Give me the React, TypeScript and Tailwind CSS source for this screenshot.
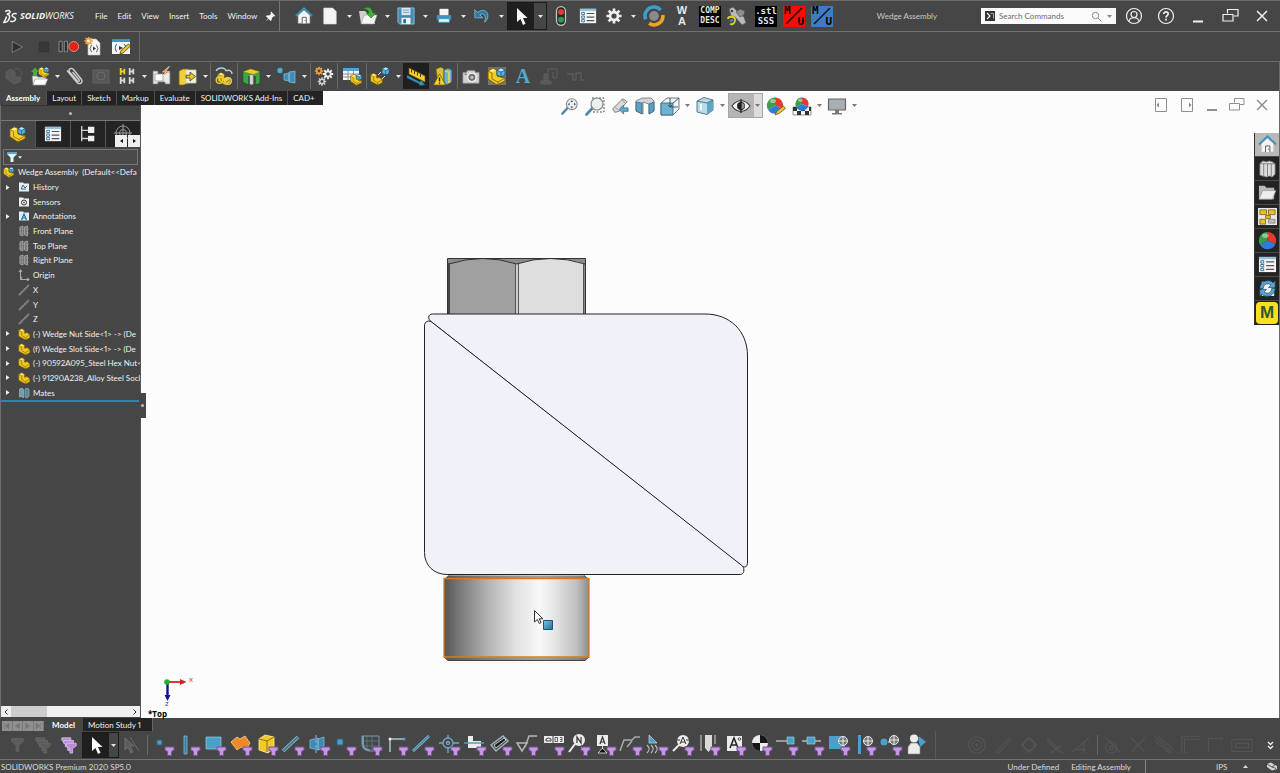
import React from "react";

type Kids = { children?: React.ReactNode };

/* ---------- shared drawing pieces ---------- */

function Svg({ size = 20, box = 20, children }: Kids & { size?: number; box?: number }) {
  return (
    <svg width={size} height={size} viewBox={`0 0 ${box} ${box}`} fill="none" aria-hidden="true" className="block shrink-0">
      {children}
    </svg>
  );
}

const Part = ({ t = "" }: { t?: string }) => (
  <g transform={t}>
    <path d="M2 5l4-2 4 2v4l3-1 4 3v4l-6 3-9-5z" fill="#f2c81e" stroke="#7a5c08" strokeWidth="1" />
    <path d="M2 5l4 2v5l5 3 6-4M11 15v3" stroke="#8f6f0c" strokeWidth="1" />
    <path d="M3 5l3-1.4L9 5 6 6.4z" fill="#ffe98a" />
  </g>
);
const Cube = ({ t = "" }: { t?: string }) => (
  <g transform={t}>
    <path d="M0 2l4-2 4 2v5l-4 2-4-2z" fill="#58b3dc" stroke="#1c4f70" strokeWidth=".8" />
    <path d="M0 2l4 2 4-2M4 4v5" stroke="#1c4f70" strokeWidth=".8" />
    <path d="M1 2l3-1.4L7 2 4 3.4z" fill="#bfe6f7" />
  </g>
);
const AsmShape = () => (
  <>
    <path d="M1 5l5-3 4 2v6l8 2v3l-8 4-9-6z" fill="#f4cc22" stroke="#7a5c08" strokeWidth="1" />
    <path d="M1 5l4 2v6l6 3 7-4M11 16v3" stroke="#94730f" />
    <path d="M2 5l4-2 3 1.4L5.400 6z" fill="#ffec94" />
    <Cube t="translate(10 2)" />
  </>
);
const PageShape = () => <path d="M4 2h8l4 4v12H4z" fill="#f5f5f5" stroke="#bdbdbd" strokeWidth=".6" />;
const Bolt = ({ t = "" }: { t?: string }) => <path transform={t} d="M8 0L2 5h3L0 10l8-5.500H5z" fill="#f58220" stroke="#fff" strokeWidth=".4" />;
const Ball = ({ r = 8, cx = 10, cy = 10 }: { r?: number; cx?: number; cy?: number }) => (
  <g transform={`translate(${cx} ${cy}) scale(${r / 8})`}>
    <path d="M0 0V-8A8 8 0 0 0-7 4z" fill="#3f9c46" />
    <path d="M0 0V-8A8 8 0 0 1 7.500 3z" fill="#e23a2c" />
    <path d="M0 0L-7 4A8 8 0 0 0 7.500 3z" fill="#2d7cd6" />
    <ellipse cx="-2" cy="-4.500" rx="3" ry="2" fill="#fff" opacity=".45" />
  </g>
);
const House = () => (
  <>
    <path d="M3.500 9v9h13V9L10 3.500z" fill="#f4f4f4" stroke="#bbb" strokeWidth=".6" />
    <path d="M1 10l9-8.500L19 10" stroke="#3b91bd" strokeWidth="2" />
    <path d="M8 18v-6.500h4.500V18" stroke="#555" fill="#fff" />
    <circle cx="11.200" cy="14.800" r=".6" fill="#333" />
  </>
);
const ListShape = () => (
  <>
    <path d="M1 2h18v16H1z" fill="#f4f4f4" />
    <path d="M1 2h18v2.500H1z" fill="#8fc4de" />
    <path d="M3 6h3v2.500H3zM3 10h3v2.500H3zM3 14h3v2.500H3z" fill="#fff" stroke="#2c6f94" />
    <path d="M8.500 7.200h8.500M8.500 11.200h8.500M8.500 15.200h8.500" stroke="#555" strokeWidth="1.300" />
  </>
);
const Gear = ({ t = "", c = "#f0f0f0", hole = "#464646" }: { t?: string; c?: string; hole?: string }) => (
  <g transform={t}>
    <circle r="5.800" fill={c} />
    <path d="M0-8.400V8.400M-8.400 0H8.400M-6-6L6 6M6-6L-6 6" stroke={c} strokeWidth="3" />
    <circle r="2.900" fill={hole} />
  </g>
);
const Lens = ({ dashed }: { dashed?: boolean }) => (
  <>
    {dashed && <path d="M7 2h12v14H8" stroke="#555" strokeDasharray="2 1.500" />}
    <path d="M1.500 18.500l6-6.500" stroke="#4d88a8" strokeWidth="2.600" strokeLinecap="round" />
    <circle cx="12" cy="8" r="6" fill="#eceff1" stroke="#888" strokeWidth="1.200" />
  </>
);

const S = "#9dabb3";
const icons: Record<string, React.ReactNode> = {
  home: <House />,
  newDoc: <path d="M3 1h10l4 4v14H3z" fill="#f3f3f3" stroke="#cfcfcf" strokeWidth=".6" />,
  open: (
    <>
      <path d="M1 5h6l2 2h8v11H3z" fill="#cfcfcf" />
      <path d="M3 18l3-9h13l-3 9z" fill="#f5f5f5" stroke="#999" strokeWidth=".6" />
      <path d="M5 3c4-3 9-2 10 4h3l-5 5-4.500-5H11C11 4 8 3 5 3z" fill="#45ad3c" stroke="#1d6a1a" strokeWidth=".6" />
    </>
  ),
  save: (
    <>
      <path d="M1 1h18v18H3l-2-2z" fill="#3f8db8" stroke="#a9d3e8" strokeWidth=".8" />
      <path d="M5 1h10v8H5z" fill="#dbe8ef" />
      <path d="M6.500 3.500h7M6.500 6h7" stroke="#7f99a7" />
      <path d="M5 12h10v7H5z" fill="#f5f5f5" />
      <path d="M7 13.500h3v4.500H7z" fill="#2c6a8f" />
    </>
  ),
  print: (
    <>
      <path d="M5 2h10v8H5z" fill="#f5f5f5" />
      <path d="M2 9h16v5H2z" fill="#3f93c0" />
      <path d="M4 13h12v4H4z" fill="#f2f2f2" stroke="#3f93c0" />
    </>
  ),
  undo: (
    <path d="M2 3v9h9L7.500 8.600c4-2.600 8 .4 5.500 8.400 6.500-6 3.500-14.500-3.500-13-2 .4-3.500 1.400-4.500 2z" fill="#2f79a3" stroke="#8bc4e2" strokeWidth=".8" />
  ),
  pointer: <path d="M6 2v14l3.500-3 2.500 6 2.500-1.200L12 12h4.500z" fill="#fafafa" />,
  traffic: (
    <>
      <rect x="5.500" y=".7" width="9" height="18.600" rx="4.500" fill="#262626" stroke="#c4c4c4" strokeWidth="1.300" />
      <circle cx="10" cy="6" r="3" fill="#e03a2f" />
      <circle cx="10" cy="13.800" r="3" fill="#2f9a4b" />
    </>
  ),
  list: <ListShape />,
  gear: <Gear t="translate(10 10)" />,
  ring: (
    <>
      <path d="M2.500 13A8 8 0 0 1 16 4.700" stroke="#3aa0c9" strokeWidth="3.200" />
      <path d="M18 9A8 8 0 0 1 5.500 16.600" stroke="#f2a326" strokeWidth="3.200" />
      <circle cx="10" cy="10" r="4.500" fill="#8a8a8a" />
    </>
  ),
  knurl: (
    <>
      <path d="M2 3l4-2 3 3 8 7 2 6-4 2-7-8-4-1z" fill="#b9b9b9" stroke="#555" strokeWidth=".7" />
      <path d="M9 6l4-3 5 2-1 4-4 2z" fill="#8d8d8d" stroke="#444" strokeWidth=".6" />
      <path d="M1 13c0-3 6-3 7 0s-2 6-5 5" stroke="#e2cc2a" strokeWidth="1.800" />
      <path d="M3 15l3-1" stroke="#2f93c9" strokeWidth="2" />
      <circle cx="5" cy="5" r="1.300" fill="#444" />
    </>
  ),
  play: <path d="M4 3l13 7-13 7z" fill="#303030" stroke="#8a8a8a" />,
  stop: <path d="M4 4h12v12H4z" fill="#383838" stroke="#343434" />,
  pauseRec: (
    <>
      <path d="M1 5h3v10H1zM6 5h3v10H6z" fill="#2d2d2d" stroke="#8c8c8c" strokeWidth=".9" />
      <circle cx="15" cy="10" r="4.700" fill="#e32213" stroke="#d9a6a0" strokeWidth=".8" />
    </>
  ),
  macroNew: (
    <>
      <PageShape />
      <path d="M8 8c-1.500 0-1 3-2 3.500 1 .5.500 3.500 2 3.500M12 8c1.500 0 1 3 2 3.500-1 .5-.5 3.500-2 3.500" stroke="#555" />
      <path d="M9 9.500l3 2-3 2z" fill="#333" />
      <Gear t="translate(4.500 4) scale(.5)" c="#f2a23a" hole="#fff" />
    </>
  ),
  macroEdit: (
    <>
      <path d="M1 2h18v15H1z" fill="#f5f5f5" />
      <path d="M1 2h18v3H1z" fill="#3f93c0" />
      <path d="M6 7.500c-2 0-1 3-2 3.500 1 .5 0 3.500 2 3.500M13 7.500c2 0 1 3 2 3.500" stroke="#555" />
      <path d="M8 9l4 2-4 2z" fill="#333" />
      <path d="M9 17l1-3.500L17.500 7l2 2-7.500 7z" fill="#f0c52b" stroke="#4b3b0c" strokeWidth=".8" />
    </>
  ),
  dimAsm: (
    <g opacity=".22">
      <path d="M2 6l5-3 4 3v5l6 1-1 4-6 2-8-6z" fill="#9a9a9a" stroke="#aaa" />
      <circle cx="13" cy="7" r="4.500" stroke="#aaa" />
    </g>
  ),
  insertComp: (
    <>
      <path d="M2 10h5l1 1h8v8H3z" fill="#f2f2f2" stroke="#777" strokeWidth=".7" />
      <path d="M5 13h13l-3 6H3z" fill="#fff" stroke="#888" strokeWidth=".6" />
      <path d="M3 10V6H1l4-4.500L9 6H7v4z" fill="#46ad3e" />
      <g transform="translate(8 0) scale(.6)"><AsmShape /></g>
    </>
  ),
  clip: (
    <path d="M2 4.500l10 12c2.500 2.500 6.500 0 4.500-3L8.500 3.500C6 1 3 3.500 4.500 6l8 9c1.200 1 2.700 0 1.500-1.500L7.500 6" stroke="#cdcdcd" strokeWidth="1.400" />
  ),
  dimPart: (
    <g opacity=".25">
      <path d="M2 4h16v13H2z" fill="#888" stroke="#bbb" />
      <circle cx="10" cy="10" r="4" stroke="#ddd" />
    </g>
  ),
  linear: (
    <>
      <path d="M3 1v8M3 5h5M7 2v6" stroke="#e8cf2b" strokeWidth="2" />
      <path d="M13 1v8M13 5h5M17 2v6M3 11v8M3 15h5M7 12v6M13 11v8M13 15h5M17 12v6" stroke="#d8d8d8" strokeWidth="2" />
    </>
  ),
  fastener: (
    <>
      <path d="M1 5h5v3h7V6h5v12h-5v-2H6v2H1z" fill="#e9e9e9" stroke="#777" strokeWidth=".8" />
      <path d="M3 8h8v7H3z" fill="#fff" stroke="#8b8b8b" strokeWidth=".7" />
      <Bolt t="translate(8 0) scale(1.200)" />
    </>
  ),
  move: (
    <>
      <path d="M1 5l4-2h5v14l-4 2H1z" fill="#f0cf3b" stroke="#7b620d" strokeWidth=".8" />
      <path d="M8 4h10v13H8z" fill="#f7f1cf" stroke="#c9c9c9" strokeWidth=".8" />
      <path d="M8 9.200h4V6l5.500 4.500L12 15v-3H8z" fill="#e8c822" stroke="#3a3a3a" strokeWidth=".8" />
    </>
  ),
  showHidden: (
    <>
      <Part t="translate(2 4) scale(.85)" />
      <path d="M2 5c2-4 9-4 10 0" stroke="#a7cfe2" strokeWidth="1.500" />
      <path d="M12 5c3-2 6 0 6 3" stroke="#c8c8c8" strokeWidth="1.500" />
      <circle cx="5.500" cy="14" r="3.300" stroke="#e0c84a" strokeWidth="1.400" />
      <circle cx="14" cy="15" r="3.300" stroke="#e9d46a" strokeWidth="1.400" />
    </>
  ),
  features: (
    <>
      <path d="M1 5l8-3 10 3v12l-5 2v-9H7v9l-6-3z" fill="#3fa648" stroke="#125a1b" strokeWidth=".8" />
      <path d="M1 5l8-3 10 3-7 3z" fill="#e9cf2f" stroke="#8a7412" strokeWidth=".6" />
      <path d="M8 8h4v10l-2 1-2-1z" fill="#d6d6d6" stroke="#555" strokeWidth=".6" />
    </>
  ),
  refGeom: (
    <>
      <circle cx="4" cy="4.500" r="3" fill="#5aa9cd" stroke="#25536b" strokeDasharray="1.500 1" />
      <path d="M8 8l5-1v8l-5-1zM13 6l6-1v12l-6-1z" fill="#3d8fb8" stroke="#86c2de" strokeWidth=".7" />
    </>
  ),
  motion: (
    <>
      <Gear t="translate(5 5) scale(.5)" c="#f0a144" />
      <Gear t="translate(14 8) scale(.62)" c="#ececec" />
      <Gear t="translate(8 15.500) scale(.5)" c="#d0d0d0" />
    </>
  ),
  bom: (
    <>
      <path d="M1 2h16v12H1z" fill="#f5f5f5" />
      <path d="M1 2h16v3H1z" fill="#55a3ca" />
      <path d="M1 8h16M1 11h16M6 5v9M11.500 5v9" stroke="#8f8f8f" />
      <g transform="translate(8 7) scale(.65)"><AsmShape /></g>
    </>
  ),
  explode: (
    <>
      <Part t="translate(-1 5) scale(.78)" />
      <Cube t="translate(12 1) scale(.9)" />
      <path d="M8 9l3-3M12 13l3-3" stroke="#e3e3e3" strokeWidth="1" />
    </>
  ),
  ruler: (
    <>
      <path d="M3 2l16 8v6L3 8z" fill="#f2cf2f" stroke="#826709" strokeWidth=".7" />
      <path d="M5.500 3.500v3M8.500 5v3M11.500 6.500v3M14.500 8v3" stroke="#4d3d09" />
      <path d="M1 9l13 7 1-2 4 5-6 .5.5-1.500L1 12z" fill="#3f93bd" stroke="#1c5069" strokeWidth=".6" />
    </>
  ),
  interference: (
    <>
      <path d="M3 3l5-2 3 2v15H5z" fill="#d7bf3a" stroke="#6d5b10" strokeWidth=".7" />
      <path d="M11 4l4-2 4 2v12l-5 3-3-2z" fill="#6fb1d0" stroke="#244c60" strokeWidth=".7" />
      <path d="M12 5l4 1v11" stroke="#ead04d" strokeWidth="1.800" />
      <path d="M6.500 8l6 11H.5z" fill="#f9d62f" stroke="#7a5c08" strokeWidth=".8" />
      <path d="M6.500 11.500v4M6.500 16.500v1.300" stroke="#222" strokeWidth="1.400" />
    </>
  ),
  camera: (
    <>
      <path d="M1 6h4l1-2h8l1 2h4v12H1z" fill="#d2d2d2" stroke="#8d8d8d" strokeWidth=".8" />
      <circle cx="11" cy="11.500" r="4.600" fill="#707070" stroke="#fafafa" strokeWidth="1.300" />
      <circle cx="11" cy="11.500" r="1.800" fill="#b7c9d1" />
      <path d="M3 8h2" stroke="#333" />
    </>
  ),
  asm: <AsmShape />,
  asmBox: (
    <>
      <path d="M1 1h18v18H1z" fill="#8d8d8d" opacity=".65" />
      <AsmShape />
    </>
  ),
  dimCrane: (
    <g opacity=".22" stroke="#b5b5b5">
      <path d="M2 18h10v-3H2zM5 15V8h4v7z" fill="#999" />
      <path d="M9 8V3h9v9h-4V6" />
    </g>
  ),
  dimStep: <path opacity=".2" d="M2 8h6v6h3V7h5v7h3" stroke="#bbb" strokeWidth="1.300" />,
  zoomFit: (
    <>
      <Lens />
      <path d="M12 3.500l1.500 2h-3zM12 12.500l1.500-2h-3zM7.500 8l2-1.500v3zM16.500 8l-2-1.500v3z" fill="#444" />
    </>
  ),
  zoomArea: <Lens dashed />,
  prevView: (
    <>
      <path d="M2 13L13 2l5 3-9 11-5 1z" fill="#dadada" stroke="#777" />
      <path d="M4 11l4 3M12 3l4 4" stroke="#999" />
      <path d="M19 12v4h-5v3l-5-5 5-5v3z" fill="#5fa7c9" stroke="#2d6784" strokeWidth=".7" />
    </>
  ),
  section: (
    <>
      <path d="M1 5l6-3h9l3 3v10l-5 3V8l-6-2v12l-7-3z" fill="#cfd5d8" stroke="#69757b" strokeWidth=".8" />
      <path d="M1 6l6 1v11l-6-3zM14 8l5-2v9l-5 3z" fill="#5d9fc0" stroke="#2e6179" strokeWidth=".7" />
    </>
  ),
  viewOrient: (
    <>
      <path d="M1 7l6-5h12v11l-6 6H1z" fill="#eef3f5" stroke="#5f6f77" strokeWidth=".9" />
      <path d="M1 7h12v12H1z" fill="#6db2d2" stroke="#2e6179" strokeWidth=".8" />
      <path d="M13 7l6-5M10 2v9h8M8 9l2 2 2-2" stroke="#444" strokeWidth=".9" />
    </>
  ),
  display: (
    <>
      <path d="M2 5l7-3.500L18 4v10l-6 4.500L2 16z" fill="#bcdbe8" stroke="#4c6e7e" strokeWidth=".9" />
      <path d="M12 7v11.500l6-4.500V4z" fill="#5fa5c6" />
      <path d="M2 5l10 2 6-3" stroke="#4c6e7e" strokeWidth=".9" />
      <path d="M6 8v6" stroke="#f7fcff" strokeWidth="2" />
    </>
  ),
  eye: (
    <>
      <path d="M1 10c5-7 13-7 18 0-5 7-13 7-18 0z" fill="#f4f4f4" stroke="#3c3c3c" strokeWidth="1.200" />
      <circle cx="10" cy="10" r="4" fill="#222" />
      <path d="M10 3v14" stroke="#111" strokeWidth="1.200" />
      <path d="M10.500 7a3 3 0 0 1 0 6z" fill="#8e8e8e" />
    </>
  ),
  appearance: (
    <>
      <Ball r={8} cx={9} cy={9.500} />
      <path d="M9 19l2-4 6.500-5 2 2.500-6.500 5z" fill="#eac23a" stroke="#5a470d" strokeWidth=".7" />
    </>
  ),
  scene: (
    <>
      <path d="M1 11h18v8H1z" fill="#f5f5f5" stroke="#555" strokeWidth=".6" />
      <path d="M1 11h4v4H1zM9 11h4v4H9zM5 15h4v4H5zM13 15h4v4h-4zM17 11h2v4h-2z" fill="#333" />
      <Ball r={6.500} cx={10} cy={8} />
    </>
  ),
  monitor: (
    <>
      <path d="M1.500 3h17v11h-17z" fill="#a7afb3" stroke="#666" strokeWidth="1.200" />
      <path d="M8 14h4v3h3v1.500H5V17h3z" fill="#777" />
    </>
  ),
  books: (
    <>
      <path d="M2 5l3-3 4 1 3-1 3 1 3 2v11l-3 3-3-1-3 1-4-1-3-1z" fill="#dcdcdc" stroke="#777" strokeWidth=".8" />
      <path d="M6 5v13M10 5v13M14 5v13M2 5h16" stroke="#777" strokeWidth=".9" />
    </>
  ),
  folder: (
    <>
      <path d="M1 3h6l2 2h8v12H1z" fill="#b8b8b8" />
      <path d="M1 17L5 8h14l-4 9z" fill="#ededed" stroke="#8b8b8b" strokeWidth=".6" />
    </>
  ),
  palette: (
    <>
      <path d="M0 1h20v18H0z" fill="#e8e8e8" />
      <path d="M2 3h7v5H2zM11 3h7v5h-7zM2 13h6v5H2zM8 9h5v3H8z" fill="#eac12c" stroke="#6f5a0d" strokeWidth=".8" />
      <path d="M11 13h7v4h-7z" fill="#bdbdbd" stroke="#777" strokeWidth=".7" />
    </>
  ),
  ball: <Ball r={9} />,
  forum: (
    <>
      <path d="M4 3h9l4 4v11H4z" fill="#eef3f5" />
      <path d="M2 10C2 3 11-1 16 4l2-2v7h-7l2.500-2.500C10 3.500 6 5 5.500 10zM18 10c0 7-9 11-14 6l-2 2v-7h7l-2.500 2.500C10 16.500 14 15 14.500 10z" fill="#5ba6cd" stroke="#1f5370" strokeWidth=".8" />
    </>
  ),
};

/* Selection filter glyphs, drawn on a 26 unit cell */
const Funnel = () => (
  <path d="M14 15h9v3.500h-1.500l-1 1.500v3.500h-4V20l-1-1.500H14z" fill="#c39adf" stroke="#7d4f9b" strokeWidth="1" />
);
const B = "#4aa0c8";
const W = "#ececec";
const filters: React.ReactNode[] = [
  <path d="M6 8h5v5H6z" fill={B} stroke="#2a617d" />,
  <path d="M7 4h3v18H7z" fill="#3a7fa1" stroke="#8cc6e0" strokeWidth=".7" />,
  <path d="M3 5h15v12H3z" fill={B} stroke="#9ad0e6" strokeWidth=".7" />,
  <path d="M2 10l6-5 3 2 5-3 5 7-4 7-5-3-4 3z" fill="#ed8a23" stroke="#ffd29b" strokeWidth=".8" />,
  <g><path d="M4 7l6-4 9 2v11l-6 5-9-3z" fill="#f1c92a" stroke="#fff0a0" strokeWidth=".8" /><path d="M4 7l8 2v11M12 9l7-4" stroke="#8f720f" /></g>,
  <g><path d="M2 19L17 5" stroke="#8fc0d6" strokeWidth="3.500" /><path d="M2 19L17 5" stroke="#44798f" strokeWidth="2" /></g>,
  <g><path d="M3 8l8-2v12l-8-2zM11 7l6-2v11l-6 2z" fill="#3b8bb2" stroke="#7cbad7" strokeWidth=".8" /><path d="M9 3v19" stroke="#9ac" strokeDasharray="3 2" /></g>,
  <path d="M4 7h6v6H4z" fill={B} stroke="#2a617d" />,
  <g stroke="#6f9db2"><path d="M3 4h17v15h-9c-5 0-8-3-8-8z" /><path d="M8 4v13M13 4v14M4 9h16M5 14h15" strokeWidth=".8" opacity=".6" /><path d="M4 4v8c0 4 3 6 7 6" strokeWidth="2" /></g>,
  <g><path d="M5 20V7h14" stroke="#8fa6b1" strokeWidth="2" /><circle cx="5" cy="7" r="1.500" fill={W} /><circle cx="19" cy="7" r="1.500" fill={B} /></g>,
  <g><path d="M2 19L18 4" stroke="#8fc0d6" strokeWidth="2.800" /><path d="M2 19L18 4" stroke="#3b86aa" strokeWidth="1.300" /></g>,
  <g stroke="#6fa9c3" strokeWidth="1.300"><circle cx="11" cy="11" r="5" /><circle cx="11" cy="11" r="1.500" /><path d="M11 3v4M11 15v6M2 11h4M16 11h6" /></g>,
  <g><path d="M5 4h5v5h8v7H5z" fill={W} /><path d="M1 11h20" stroke={B} strokeWidth="1.500" /></g>,
  <g><path d="M2 13L14 4l5 5-12 10z" stroke="#9cb5c0" strokeWidth="1.500" /><path d="M5 13l10-7 2 2-10 8z" fill="#222" stroke={W} strokeWidth=".8" /></g>,
  <path d="M2 11h10l-5 8zM10 15l4-11h8" stroke="#b5b5b5" strokeWidth="1.500" />,
  <g><path d="M3 4h20v7H3z" fill={W} /><path d="M5 9V7l2.500-1L10 7v2zM12 4v7" stroke="#444" /><path d="M14 5.500h2.500v4H14zM19 5.500h2v4h-2M19 7.500h2" stroke="#444" strokeWidth=".8" /></g>,
  <g><circle cx="12" cy="8" r="6" fill={W} /><path d="M8 12l-6 8" stroke={W} strokeWidth="2" /><path d="M10 11V5l4 6V5" stroke="#333" strokeWidth="1.200" /></g>,
  <g><path d="M4 3h11v11H4z" fill={W} /><path d="M7 12l2.500-7L12 12M8 10h3" stroke="#333" strokeWidth="1.200" /><path d="M9.500 14v3M5 21l4.500-5 4.500 5z" fill="#111" stroke={W} strokeWidth=".8" /></g>,
  <path d="M1 19l4-11h8l3-3h5M8 15l5-6" stroke="#a9a9a9" strokeWidth="1.500" />,
  <g><path d="M4 3v8h8z" fill={B} stroke={W} strokeWidth=".6" /><path d="M2 13c3 3 3 5 0 8M6 13c3 3 3 5 0 8M10 13c3 3 3 5 0 8" stroke="#b7b7b7" strokeWidth="1.300" /></g>,
  <g><circle cx="12" cy="9" r="6" fill={W} /><path d="M8 13l-6 6" stroke={W} strokeWidth="2" /><path d="M9 12l3-7 3 7M6 8h3M15 8h3M10 10h4" stroke="#333" /></g>,
  <g><path d="M4 3v16M18 3v9" stroke="#8e8e8e" strokeWidth="2" /><path d="M8 3h7v13l-3.500 4L8 16z" fill="#d9d9d9" /></g>,
  <g><path d="M4 4h15v15H4z" fill={W} /><path d="M7 16l4-10 4 10M8.500 13h5" stroke="#222" strokeWidth="1.500" /><circle cx="16.500" cy="7" r="1.300" stroke="#333" strokeWidth=".8" /></g>,
  <g><circle cx="11" cy="11" r="8" fill={W} /><path d="M11 11V3a8 8 0 0 1 8 8zM11 11v8a8 8 0 0 1-8-8z" fill="#161616" /></g>,
  <g><path d="M1 9h11" stroke={W} /><path d="M12 5h7v7h-7z" fill={B} stroke="#9ad0e6" strokeWidth=".7" /></g>,
  <g><path d="M1 9h19" stroke={W} /><path d="M6 5h8v7H6z" fill={B} stroke="#9ad0e6" strokeWidth=".7" /></g>,
  <g><path d="M2 4h16v13H2z" fill={B} /><circle cx="16" cy="9" r="4.500" fill="#777" stroke={W} /><path d="M12 9h8M16 5v8" stroke={W} /></g>,
  <g><path d="M5 3h3v19H5z" fill={B} /><circle cx="15" cy="9" r="4.500" fill="#777" stroke={W} /><path d="M11 9h8M15 5v8" stroke={W} /></g>,
  <g><circle cx="5" cy="10" r="3.500" fill={B} /><circle cx="15" cy="8" r="4.500" fill="#777" stroke={W} /><path d="M9 10h3M11 8h8M15 4v8" stroke={W} /></g>,
];

const sketchGlyphs: React.ReactNode[] = [
  <g><circle cx="13" cy="13" r="9" /><circle cx="13" cy="13" r="5" /><circle cx="13" cy="13" r="1" /></g>,
  <path d="M4 22L20 5M8 22l14-15" />,
  <g><circle cx="13" cy="13" r="6" /><path d="M5 13l8-8 8 8-8 8z" /></g>,
  <path d="M4 5l18 17M8 22l12-9M4 8l14 13" />,
  <path d="M3 21L22 5M8 18h10M16 8v14" />,
];
const sketchGlyphs2: React.ReactNode[] = [
  <g><path d="M5 4l17 17" /><circle cx="12" cy="16" r="6" /><circle cx="12" cy="16" r="2" /></g>,
  <path d="M4 4l9 9 8-8M13 13l-7 8M13 13l7 7" />,
  <path d="M3 4l18 17M7 4l16 14M3 8l16 14" />,
  <path d="M4 22V4h20M7 22V7h17" />,
  <path d="M5 21V6h16M3 6h4M19 4v4" />,
  <path d="M2 7h22v13H2zM6 11h14v5H6z" />,
];

/* ---------- toolbar building blocks ---------- */

function Tool({ name, label, size = 20, active, cell = "w-[26px]" }: { name: string; label: string; size?: number; active?: boolean; cell?: string }) {
  return (
    <button type="button" aria-label={label} className={`flex h-full shrink-0 items-center justify-center ${cell} ${active ? "bg-[#1f1f1f]" : ""}`}>
      <Svg size={size}>{icons[name]}</Svg>
    </button>
  );
}
function Drop({ cell = "w-[9px]", tone = "#e6e6e6" }: { cell?: string; tone?: string }) {
  return (
    <button type="button" aria-label="More" className={`flex h-full shrink-0 items-center justify-center ${cell}`}>
      <svg width="5" height="3" viewBox="0 0 5 3" aria-hidden="true"><path d="M0 0h5L2.500 3z" fill={tone} /></svg>
    </button>
  );
}
const Sep = () => <span className="h-full w-px shrink-0 bg-[#6a6a6a]" />;

function MenuBar() {
  return (
    <nav className="flex gap-2.5">
      {["File", "Edit", "View", "Insert", "Tools", "Window"].map((m) => (
        <button key={m} type="button">{m}</button>
      ))}
    </nav>
  );
}

function TitleBar() {
  return (
    <header className="flex h-8 shrink-0 items-center border-y border-t-[#6b6b6b] border-b-[#74706a]">
      <div className="flex w-[280px] shrink-0 items-center self-stretch border-r border-[#747474] pl-[3px]">
        <svg width="15" height="15" viewBox="0 0 14 14" fill="none" stroke="#f2f2f2" strokeWidth="1.400" className="shrink-0" aria-hidden="true">
          <path d="M2 2.500c2-1.500 5-1.500 4.500.5-.3 1-2 1.500-3 2 2 0 3 1 2.500 3C5.500 11 3 12.500.800 12.500c1.500-2 2-3.500 2.500-5.500" />
          <path d="M12.800 4.500c-2-.5-4.300 0-4.300 1.500 0 1.700 3.500 1.500 3.300 3.500-.2 1.800-3 2.500-5 2" />
        </svg>
        <div className="ml-0.5 w-[75px] shrink-0 font-['Open_Sans'] text-[9px] italic leading-3 text-[#f4f4f4]">
          <b>SOLID</b>WORKS
        </div>
        <MenuBar />
        <svg width="11" height="11" viewBox="0 0 10 10" className="mr-[3px] ml-auto block shrink-0" aria-hidden="true">
          <path d="M5.500.5l4 4-1 .5-.8-.3-1.500 1.800L6 8.300l-1 .7-1.700-2L.500 9.500 2.800 6.500.8 4.700l1-.8 2 .1L5.500 2.500 5 1.200z" fill="#f5f5f5" />
        </svg>
      </div>
      <div className="flex h-[26px] shrink-0 items-center pl-[11px]">
        <Tool name="home" label="Home" size={18} />
        <Tool name="newDoc" label="New" size={18} /><Drop cell="w-3" />
        <Tool name="open" label="Open" /><Drop cell="w-3" />
        <Tool name="save" label="Save" size={18} /><Drop cell="w-3" />
        <Tool name="print" label="Print" size={18} /><Drop cell="w-3" />
        <Tool name="undo" label="Undo" size={18} /><Drop cell="w-3" />
        <div className="flex h-[28px] border border-[#1b1b1b]">
          <Tool name="pointer" label="Select" active /><Drop cell="w-3" />
        </div>
        <Tool name="traffic" label="Rebuild" cell="w-7" />
        <Tool name="list" label="File properties" size={18} />
        <Tool name="gear" label="Options" size={18} /><Drop cell="w-3" />
      </div>
      <div className="flex h-[26px] shrink-0 items-center gap-1.5 pl-1">
        <button type="button" aria-label="Sync" className="w-[22px]"><Svg size={22}>{icons.ring}</Svg></button>
        <button type="button" className="flex h-[22px] w-[22px] flex-col items-center font-['Liberation_Sans'] text-[11px] leading-[11px] font-bold text-[#e8e8e8]"><span>W</span><span>A</span></button>
        <button type="button" className="h-[21px] w-[22px] bg-black font-['DejaVu_Sans_Mono'] text-[8px] leading-[10px] font-bold text-[#e8e8e0]">COMP<br />DESC</button>
        <button type="button" aria-label="Knurl" className="w-[22px]"><Svg>{icons.knurl}</Svg></button>
        <button type="button" className="h-[21px] w-[22px] bg-black font-['DejaVu_Sans_Mono'] text-[9px] leading-[10px] font-bold text-[#dfeaf5]">.stl<br />SSS</button>
        <MU tone="bg-[#f80d06]" />
        <MU tone="bg-[#3d7cc4]" />
      </div>
      <div className="min-w-0 flex-1 truncate text-center text-[#c9c9c9]">Wedge Assembly</div>
      <label className="flex h-4 w-[135px] shrink-0 items-center bg-[#fafafa] pr-1 pl-1">
        <Svg size={10} box={10}><path d="M0 0h10v10H0z" fill="#333" /><path d="M2 2l3 3-3 3" stroke="#fff" strokeWidth="1.200" /><path d="M5.500 2.500h3v5" stroke="#aaa" /></Svg>
        <input aria-label="Search Commands" placeholder="Search Commands" className="ml-1 w-0 min-w-0 flex-1 bg-transparent text-[#333] outline-none placeholder:text-[#6b6b6b]" />
        <Svg size={11} box={11}><circle cx="4.500" cy="4.500" r="3.200" stroke="#8a8a8a" /><path d="M7 7l3.500 3.500" stroke="#8a8a8a" /></Svg>
        <span className="ml-1"><Drop cell="w-[6px]" tone="#888" /></span>
      </label>
      <div className="flex shrink-0 items-center pr-0.5 pl-0.5">
        {[
          <><circle cx="9" cy="9" r="7.500" /><circle cx="9" cy="7.500" r="3" /><path d="M4 14.500c.5-5 9.500-5 10 0" /></>,
          <><circle cx="9" cy="9" r="7.500" /><path d="M6.800 7c0-3 4.600-2.800 4.400 0-.1 1.600-2.200 1.700-2.200 3.500M9 11.700v1.700" strokeWidth="1.700" /></>,
          <path d="M4 14.500h10" strokeWidth="2" />,
          <path d="M6.500 6.500v-4H17v6.500h-4M2 7.500h10v6.500H2z" />,
          <path d="M4 4l10 10M14 4L4 14" strokeWidth="1.500" />,
        ].map((g, i) => (
          <button key={i} type="button" aria-label={["Account", "Help", "Minimize", "Restore", "Close"][i]} className="flex w-8 justify-center">
            <svg width="18" height="18" viewBox="0 0 18 18" fill="none" stroke="#f0f0f0" strokeWidth="1.200" aria-hidden="true">{g}</svg>
          </button>
        ))}
      </div>
    </header>
  );
}

function MU({ tone }: { tone: string }) {
  return (
    <button type="button" className={`flex h-[21px] w-[22px] items-center justify-between px-px font-['DejaVu_Sans_Mono'] text-[11px] leading-[10px] font-bold text-black ${tone}`}>
      <span className="self-start">M</span>
      <svg width="6" height="20" viewBox="0 0 6 20" className="-mx-0.5 overflow-visible" aria-hidden="true"><path d="M-5 18L11 2" stroke="#111" strokeWidth="1.400" /></svg>
      <span className="self-end">U</span>
    </button>
  );
}

function MacroBar() {
  return (
    <div className="flex h-[30px] shrink-0 items-center border-b border-[#6a6a68]">
      <div className="flex h-full w-[140px] items-center border-r border-[#666] pl-[3px]">
        <Tool name="play" label="Run macro" size={16} cell="w-7" />
        <Tool name="stop" label="Stop macro" size={16} cell="w-[25px]" />
        <Tool name="pauseRec" label="Record macro" size={21} cell="w-[25px]" />
        <Tool name="macroNew" label="New macro" />
        <Tool name="macroEdit" label="Edit macro" cell="w-7" />
      </div>
    </div>
  );
}

function Ribbon() {
  return (
    <div className="flex h-[29px] shrink-0 items-center border-r border-[#6a6a6a] pt-px pr-px pb-[2px] pl-px">
      <Tool name="dimAsm" label="Edit component" />
      <Tool name="insertComp" label="Insert components" /><Drop />
      <Tool name="clip" label="Mate" />
      <Tool name="dimPart" label="Component preview" />
      <Tool name="linear" label="Linear component pattern" size={18} /><Drop />
      <Tool name="fastener" label="Smart fasteners" />
      <Tool name="move" label="Move component" /><Drop /><Sep />
      <Tool name="showHidden" label="Show hidden components" /><Sep />
      <Tool name="features" label="Assembly features" size={19} /><Drop />
      <Tool name="refGeom" label="Reference geometry" /><Drop cell="w-[11px]" /><Sep />
      <Tool name="motion" label="New motion study" /><Sep />
      <Tool name="bom" label="Bill of materials" cell="w-7" /><Sep />
      <Tool name="explode" label="Exploded view" /><Drop cell="w-[10px]" />
      <Tool name="ruler" label="Instant3D" active />
      <Tool name="interference" label="Update SpeedPak" cell="w-7" /><Sep />
      <Tool name="camera" label="Take snapshot" size={18} />
      <Tool name="asmBox" label="Large assembly settings" />
      <button type="button" className="w-[26px] font-['Liberation_Serif'] text-[20px] leading-[20px] font-bold text-[#52a9d2]">A</button>
      <Tool name="dimCrane" label="Stack" />
      <Tool name="dimStep" label="Step" />
    </div>
  );
}

function CommandTabs() {
  const tabs = ["Layout", "Sketch", "Markup", "Evaluate", "SOLIDWORKS Add-Ins", "CAD+"];
  return (
    <div role="tablist" className="flex h-[14px] w-max bg-[#464646]">
      <button role="tab" aria-selected="true" type="button" className="px-1.5 font-bold text-white">Assembly</button>
      {tabs.map((t) => (
        <button key={t} role="tab" aria-selected="false" type="button" className="border-l border-[#505050] bg-[#232323] px-[5px] last:pr-2">{t}</button>
      ))}
    </div>
  );
}

/* ---------- feature tree ---------- */

const treeIcons: Record<string, React.ReactNode> = {
  asm: <g transform="scale(.6)"><AsmShape /></g>,
  history: <><path d="M1 1.500h4l1 1h5v8H1z" fill="#e9eef0" /><path d="M3 8l2-4 2 3 2-2M3 8h5" stroke="#2d6f92" /></>,
  sensors: <><path d="M1 1.500h4l1 1h5v8H1z" fill="#efefef" /><circle cx="6" cy="6.500" r="2.500" stroke="#333" /><circle cx="6" cy="6.500" r=".8" fill="#333" /></>,
  notes: <><path d="M1 1.500h4l1 1h5v8H1z" fill="#dcecf4" /><path d="M3.500 10L6 4l2.500 6M4.500 8h3" stroke="#1f6d97" strokeWidth="1.200" /></>,
  plane: <><path d="M2 2l3-1v10l-3-1zM6.500 2l3-1v10l-3-1z" fill="#777" stroke="#a8a8a8" strokeWidth=".8" /><path d="M1 4h10M1 8h10" stroke="#999" strokeWidth=".7" /></>,
  origin: <path d="M2.500 1v9.500H11M1 3l1.500-2L4 3M9 9l2 1.500L9 12M4 8l-1.500 2.500" stroke="#a9a9a9" strokeWidth="1.100" />,
  axis: <path d="M1 11L11 1" stroke="#8a8a8a" strokeWidth="2.200" strokeDasharray="1.500 .4" />,
  part: <g transform="translate(-.8 -1.500) scale(.75)"><Part /></g>,
  mates: <><path d="M1.500 2c2-1 4-1 4 1v8l-1.500-1.500L1.500 10z" fill="#6f9fb4" stroke="#a4c6d4" strokeWidth=".6" /><path d="M7 2c2-1 4-1 4 1v6l-2 2-2-1z" fill="#55869c" stroke="#a4c6d4" strokeWidth=".6" /></>,
};

type Row = { icon: string; text: string; open?: boolean };
const rows: Row[] = [
  { icon: "history", text: "History", open: true },
  { icon: "sensors", text: "Sensors" },
  { icon: "notes", text: "Annotations", open: true },
  { icon: "plane", text: "Front Plane" },
  { icon: "plane", text: "Top Plane" },
  { icon: "plane", text: "Right Plane" },
  { icon: "origin", text: "Origin" },
  { icon: "axis", text: "X" },
  { icon: "axis", text: "Y" },
  { icon: "axis", text: "Z" },
  { icon: "part", text: "(-) Wedge Nut Side<1> -> (De", open: true },
  { icon: "part", text: "(f) Wedge Slot Side<1> -> (De", open: true },
  { icon: "part", text: "(-) 90592A095_Steel Hex Nut<", open: true },
  { icon: "part", text: "(-) 91290A238_Alloy Steel Sock", open: true },
  { icon: "mates", text: "Mates", open: true },
];

function FeaturePanel() {
  return (
    <aside className="flex min-h-0 w-[141px] flex-1 flex-col border-r border-l border-[#6d6d6d] border-r-[#555] bg-[#464646]">
      <div className="flex h-[16px] shrink-0 items-center justify-center border-y border-t-[#333] border-b-[#777]">
        <span className="size-[3px] rounded-full bg-[#bbb]" />
      </div>
      <div className="relative flex h-[26px] shrink-0 bg-[#232323]">
        <button type="button" aria-label="Feature tree" className="flex w-[34px] items-center justify-center bg-[#464646]"><Svg size={18}>{icons.asm}</Svg></button>
        <button type="button" aria-label="Properties" className="flex w-[35px] items-center justify-center border-l border-[#555]"><Svg size={18}>{icons.list}</Svg></button>
        <button type="button" aria-label="Configurations" className="flex w-[35px] items-center justify-center border-l border-[#555]">
          <Svg size={18}><path d="M3 1v17M3 6h7M3 15h7" stroke="#d0d0d0" strokeWidth="1.500" /><path d="M10 2h7v7h-7zM10 12h7v6h-7z" fill="#efefef" /></Svg>
        </button>
        <button type="button" aria-label="Dimensions" className="flex flex-1 items-center justify-center border-l border-[#555]">
          <Svg><circle cx="10" cy="9" r="7" stroke="#9a9a9a" /><circle cx="10" cy="9" r="3.500" stroke="#9a9a9a" /><path d="M10 0v18M1 9h18" stroke="#9a9a9a" /></Svg>
        </button>
        <div className="absolute right-0 bottom-0 flex gap-px">
          {["M4 0v4L1 2z", "M1 0v4l3-2z"].map((d, i) => (
            <button key={d} type="button" aria-label={i ? "Next tab" : "Previous tab"} className="flex h-3 w-3 items-center justify-center bg-[#eee]">
              <svg width="5" height="4" viewBox="0 0 5 4" aria-hidden="true"><path d={d} fill="#111" /></svg>
            </button>
          ))}
        </div>
      </div>
      <label className="mx-0.5 mt-0.5 flex h-4 shrink-0 items-center border border-[#777] bg-[#4a4a4a] pl-0.5">
        <Svg size={12} box={12}><path d="M1 1h10v2L7.500 6.500V11h-3V6.500L1 3z" fill="#e8f1f5" /><path d="M1 1h10v2H1z" fill="#58a9cf" /></Svg>
        <Drop cell="w-[4px]" />
        <input aria-label="Filter" className="w-0 min-w-0 flex-1 bg-transparent outline-none" />
      </label>
      <div role="tree" className="grid h-[235px] shrink-0 auto-rows-fr overflow-hidden whitespace-pre">
        <button type="button" role="treeitem" className="flex items-center pl-0.5">
          <Svg size={12} box={12}>{treeIcons.asm}</Svg>
          <span className="ml-[3px]">{"Wedge Assembly  (Default<<Defa"}</span>
        </button>
        {rows.map((r) => (
          <button key={r.text} type="button" role="treeitem" className="flex items-center pl-[5px]">
            <svg width="4" height="5" viewBox="0 0 4 5" className="mr-2 shrink-0" aria-hidden="true">
              {r.open && <path d="M0 0v5l3.500-2.500z" fill="#eee" />}
            </svg>
            <Svg size={12} box={12}>{treeIcons[r.icon]}</Svg>
            <span className="ml-[3px]">{r.text}</span>
          </button>
        ))}
      </div>
      <div className="h-0.5 shrink-0 bg-[#2f82b4]" />
      <div className="min-h-0 flex-1" />
      <div className="flex h-[11px] shrink-0 items-center bg-[#f0f0f0]">
        <button type="button" aria-label="Scroll left" className="flex w-[10px] justify-center"><svg width="4" height="6" viewBox="0 0 4 6" fill="none" aria-hidden="true"><path d="M3.500.5L1 3l2.500 2.500" stroke="#333" /></svg></button>
        <span className="h-full w-9 bg-[#cdcdcd]" />
        <button type="button" aria-label="Scroll right" className="ml-auto flex w-[10px] justify-center"><svg width="4" height="6" viewBox="0 0 4 6" fill="none" aria-hidden="true"><path d="M.5.5L3 3 .5 5.500" stroke="#333" /></svg></button>
      </div>
      <div className="h-px shrink-0" />
    </aside>
  );
}

/* ---------- graphics area ---------- */

function Model() {
  return (
    <svg viewBox="141 91 1138 627" fill="none" className="block h-full w-full" role="img" aria-label="Wedge assembly, top view">
      <defs>
        <linearGradient id="screw" x1="444" x2="589" y1="0" y2="0" gradientUnits="userSpaceOnUse">
          <stop offset="0" stopColor="#555" /><stop offset=".08" stopColor="#707070" /><stop offset=".3" stopColor="#b2b2b2" />
          <stop offset=".5" stopColor="#e2e2e2" /><stop offset=".66" stopColor="#f8f8f8" /><stop offset=".76" stopColor="#e6e6e6" />
          <stop offset=".92" stopColor="#bdbdbd" /><stop offset="1" stopColor="#8c8c8c" />
        </linearGradient>
        <linearGradient id="tag" x1="0" x2="1" y1="0" y2="1"><stop offset="0" stopColor="#7cc3e2" /><stop offset="1" stopColor="#1f6f99" /></linearGradient>
      </defs>
      <path d="M447.500 258.500h138v56h-138z" fill="#8b8b8b" />
      <path d="M450 263.500q33-10 65 0v51h-65z" fill="#a0a0a0" />
      <path d="M519 263.500q33-10 65 0v51h-65z" fill="#dedede" />
      <path d="M515 264h4v50h-4z" fill="#cfcfcf" />
      <path d="M447.500 314v-55.500h138V314M449 264q34-11 67.500 0 34-11 68.500 0" stroke="#333" />
      <path d="M449 263v51" stroke="#444" strokeWidth="2" />
      <path d="M515.500 264v50M518.500 264v50M583.500 264v50" stroke="#555" />
      <path d="M449 575.500l-5 4V656l4 4.500h137l4-4.500v-76.500l-5-4z" fill="url(#screw)" />
      <path d="M449 575.500h135l4 3H445zM445 657.500h143l-3 3H448z" fill="#555" opacity=".55" />
      <path d="M444 657l4 3.500h137l4-3.500M445 579l4-3.500M588 579l-4-3.500" stroke="#444" />
      <path d="M444 578.500h145v78.500H444z" stroke="#d17c1e" strokeWidth="1.300" />
      <g fill="#f1f1fa" stroke="#222" strokeWidth="1">
        <path d="M431 321.500c-3-2-3.500-7.500 1.500-7.500H705c25 0 42.500 17 42.500 42v206c0 5-2 5.500-5 4.500z" />
        <path d="M431 321.500L742.500 566c2.500 3 1.500 8.500-2 8.500H447c-13 0-22.500-9-22.500-22V326c0-5 4-5.500 6.500-4.500z" />
      </g>
      <path d="M534.500 610.500v11.500l2.800-2.500 2 4 1.800-.9-1.800-3.800h3.500z" fill="#fafafa" stroke="#333" />
      <path d="M543.500 620.500h9v9h-9z" fill="url(#tag)" stroke="#1c5473" />
      <path d="M167 682h15" stroke="#d82020" strokeWidth="1.800" />
      <path d="M180 679l6.500 3-6.500 3z" fill="#d82020" />
      <path d="M167.500 683v13" stroke="#101098" strokeWidth="2.400" />
      <path d="M164.500 695h6l-3 6z" fill="#101098" />
      <circle cx="167" cy="682" r="2.800" fill="#18b728" />
      <text x="189" y="682" fontSize="8" fill="#e04040">x</text>
      <text x="165" y="706" fontSize="8" fill="#3636c8">z</text>
    </svg>
  );
}

function HeadsUpBar() {
  const t = "#777";
  return (
    <div className="absolute inset-x-0 top-0.5 flex h-[25px] justify-center pr-1">
      <Tool name="zoomFit" label="Zoom to fit" size={18} cell="w-[25px]" />
      <Tool name="zoomArea" label="Zoom to area" cell="w-[25px]" />
      <Tool name="prevView" label="Previous view" size={18} cell="w-[25px]" />
      <Tool name="section" label="Section view" cell="w-[25px]" />
      <Tool name="viewOrient" label="View orientation" cell="w-[25px]" /><Drop cell="w-[10px]" tone={t} />
      <Tool name="display" label="Display style" cell="w-[25px]" /><Drop cell="w-[10px]" tone={t} />
      <div className="flex border border-[#a5a5a5] bg-[#b5b5b5]">
        <Tool name="eye" label="Hide or show items" cell="w-[25px]" />
        <span className="flex bg-[#dcdcdc]"><Drop cell="w-[8px]" tone={t} /></span>
      </div>
      <Tool name="appearance" label="Edit appearance" cell="w-[26px]" />
      <Tool name="scene" label="Apply scene" cell="w-[26px]" /><Drop cell="w-[9px]" tone={t} />
      <Tool name="monitor" label="View settings" cell="w-[26px]" /><Drop cell="w-[9px]" tone={t} />
    </div>
  );
}

function DocControls() {
  const g = [
    <><path d="M2.500 2.500h11v13h-11z" /><path d="M6 6.500v5L3.500 9z" fill="#888" stroke="none" /></>,
    <><path d="M3.500 2.500h11v13h-11z" /><path d="M11 6.500v5L13.500 9z" fill="#888" stroke="none" /></>,
    <path d="M4 14h10" strokeWidth="2" />,
    <path d="M6.500 6.500v-4H16v6h-4M1.500 7.500h10v6.500h-10z" />,
    <path d="M4 4l10 10M14 4L4 14" strokeWidth="1.500" />,
  ];
  return (
    <div className="absolute top-[5px] right-[5px] flex">
      {g.map((d, i) => (
        <button key={i} type="button" aria-label={["Pane left", "Pane right", "Minimize view", "Restore view", "Close view"][i]} className="flex w-[25px] justify-center">
          <svg width="18" height="18" viewBox="0 0 18 18" fill="none" stroke="#8f8f8f" aria-hidden="true">{d}</svg>
        </button>
      ))}
    </div>
  );
}

function TaskPane() {
  const items: [string, string][] = [["home", "Resources"], ["books", "Design library"], ["folder", "File explorer"], ["palette", "View palette"], ["ball", "Appearances"], ["list", "Custom properties"], ["forum", "Forum"]];
  return (
    <div className="absolute top-[42px] right-0 flex w-[25px] flex-col border-l border-[#333] bg-[#232323]">
      {items.map(([n, l], i) => (
        <button key={n} type="button" aria-label={l} className={`flex h-6 items-center justify-center border-b border-[#4a4a4a] ${i === 0 ? "bg-[#b9b9b9]" : ""}`}>
          <Svg size={19}>{icons[n]}</Svg>
        </button>
      ))}
      <button type="button" className="m-px h-[22px] rounded-sm bg-[#f7df22] font-['Liberation_Sans'] text-[17px] leading-[22px] font-bold text-[#2e5a2c]">M</button>
    </div>
  );
}

/* ---------- bottom bars ---------- */

function StudyTabs() {
  return (
    <div className="flex h-[13px] shrink-0 items-stretch">
      <div className="mt-[3px] ml-0.5 flex w-[42px] bg-[#8f8f8f]">
        {["M6 1v6L2 4zM1.500 1v6", "M5.500 1v6L1.500 4z", "M1.500 1v6l4-3z", "M1 1v6l4-3zM5.500 1v6"].map((d, i) => (
          <button key={i} type="button" aria-label={["First", "Previous", "Next", "Last"][i]} className="flex flex-1 items-center justify-center border-r border-[#777]">
            <svg width="7" height="8" viewBox="0 0 7 8" aria-hidden="true"><path d={d} fill="#777" stroke="#777" strokeWidth=".5" /></svg>
          </button>
        ))}
      </div>
      <button type="button" className="w-[39px] leading-3 font-bold text-white">Model</button>
      <button type="button" className="border-r border-[#666] bg-[#232323] pr-[11px] pl-[5px] leading-3">Motion Study 1</button>
    </div>
  );
}

function FilterBar() {
  return (
    <div className="flex h-[29px] shrink-0 items-center overflow-hidden border-b border-[#72726e] pl-1">
      {["#5c5c5c", "#5c5c5c", "#b98ad8"].map((c, i) => (
        <button key={i} type="button" aria-label={["Toggle filters", "Clear filters", "All filters"][i]} className="flex w-[26px] shrink-0 justify-center">
          <Svg size={18}>
            {i > 0 && <path d="M2 2h10v3L9 8v4H6V8L2 5z" fill={c} stroke={i === 2 ? "#e4c9f5" : "#6a6a6a"} strokeWidth=".8" />}
            {i > 0 && <path d="M4 5h11v3l-3.500 3v5h-3v-5L4 8z" fill={c} stroke={i === 2 ? "#e4c9f5" : "#6a6a6a"} strokeWidth=".8" />}
            <path d={i ? "M7 8h11v3l-4 3v5h-3v-5l-4-3z" : "M4 3h13v3l-5 4v7H9v-7L4 6z"} fill={c} stroke={i === 2 ? "#e4c9f5" : "#6a6a6a"} strokeWidth=".8" />
          </Svg>
        </button>
      ))}
      <div className="flex h-[26px] shrink-0 border border-[#1b1b1b]"><Tool name="pointer" label="Select" active /><Drop /></div>
      <button type="button" aria-label="Lasso" className="w-[26px] shrink-0 pl-0.5 opacity-25"><Svg><path d="M4 3v12l3-3 3 6 2-1-3-6h4zM9 2l9 14" stroke="#ddd" fill="#999" /></Svg></button>
      <span className="ml-0.5 h-5 w-px shrink-0 bg-[#6a6a6a]" />
      <span className="w-[3px] shrink-0" />
      {filters.map((f, i) => (
        <button key={i} type="button" aria-label={`Filter ${i + 1}`} className="w-[26px] shrink-0">
          <Svg size={26} box={26}>{f}<Funnel /></Svg>
        </button>
      ))}
      <button type="button" aria-label="Selection set" className="w-[26px] shrink-0">
        <Svg size={26} box={26}><circle cx="9" cy="6.500" r="4" fill={W} /><path d="M3 22v-7l3-4h6l3 4v7z" fill={W} stroke="#888" strokeWidth=".6" /><path d="M13 5l2 0 6 5-6 5z" fill={B} /></Svg>
      </button>
      <span className="mr-[29px] ml-1 h-full w-px shrink-0 bg-[#5a5a5a]" />
      {sketchGlyphs.map((g, i) => <DimTool key={i} n={i}>{g}</DimTool>)}
      <span className="mr-0.5 ml-0.5 h-5 w-px shrink-0 bg-[#666]" />
      {sketchGlyphs2.map((g, i) => <DimTool key={i} n={i + 5}>{g}</DimTool>)}
      <button type="button" aria-label="More tools" className="mr-1.5 ml-auto">
        <svg width="7" height="9" viewBox="0 0 7 9" fill="none" stroke="#f0f0f0" strokeWidth="1.300" aria-hidden="true"><path d="M1 1l2.500 2.500L6 1M1 5l2.500 2.500L6 5" /></svg>
      </button>
    </div>
  );
}
function DimTool({ n, children }: Kids & { n: number }) {
  return (
    <button type="button" aria-label={`Relation ${n + 1}`} className="w-[26px] shrink-0">
      <Svg size={24} box={26}><g stroke={S} strokeWidth="1.200" opacity=".15">{children}</g></Svg>
    </button>
  );
}

function StatusBar() {
  return (
    <footer className="flex h-[13px] shrink-0 items-center pl-px text-[#dcdcdc]">
      <span className="flex-1">SOLIDWORKS Premium 2020 SP5.0</span>
      <span className="mr-3">Under Defined</span>
      <span className="mr-[14px]">Editing Assembly</span>
      <span className="h-full w-px bg-[#888]" />
      <span className="w-[70px]" />
      <span className="w-[27px]">IPS</span>
      <svg width="5" height="3" viewBox="0 0 5 3" className="mr-[18px]" aria-hidden="true"><path d="M0 3h5L2.500 0z" fill="#ddd" /></svg>
      <svg width="12" height="9" viewBox="0 0 12 9" className="mr-0.5" aria-hidden="true"><path d="M1 2l4-1.500 3 2L11 4v3L6 8.500 1 5z" fill="#d5d5d5" /><path d="M1 2l4 2.500 5 2M6 5l4-3" stroke="#555" fill="none" /></svg>
    </footer>
  );
}

export default function App() {
  return (
    <div className="flex h-screen flex-col overflow-hidden bg-[#464646] font-['Lato','Noto_Sans',sans-serif] text-[8px] leading-[12px] text-[#f0f0f0] proportional-nums">
      <TitleBar />
      <MacroBar />
      <Ribbon />
      <main className="flex min-h-0 flex-1">
        <div className="relative z-10 flex w-[141px] shrink-0 flex-col">
          <CommandTabs />
          <FeaturePanel />
          <button type="button" aria-label="Collapse panel" className="absolute top-[302px] -right-[5px] flex h-[25px] w-[7px] items-center justify-center bg-[#464646]">
            <span className="size-[3px] rounded-full bg-[#c9b9c0]" />
          </button>
        </div>
        <section className="relative min-w-0 flex-1 border-r border-[#6a6a6a] bg-[#fcfcfc]">
          <Model />
          <HeadsUpBar />
          <DocControls />
          <TaskPane />
          <span className="absolute bottom-0 left-[7px] font-['Open_Sans'] leading-2 font-bold text-black">*Top</span>
        </section>
      </main>
      <StudyTabs />
      <FilterBar />
      <StatusBar />
    </div>
  );
}
